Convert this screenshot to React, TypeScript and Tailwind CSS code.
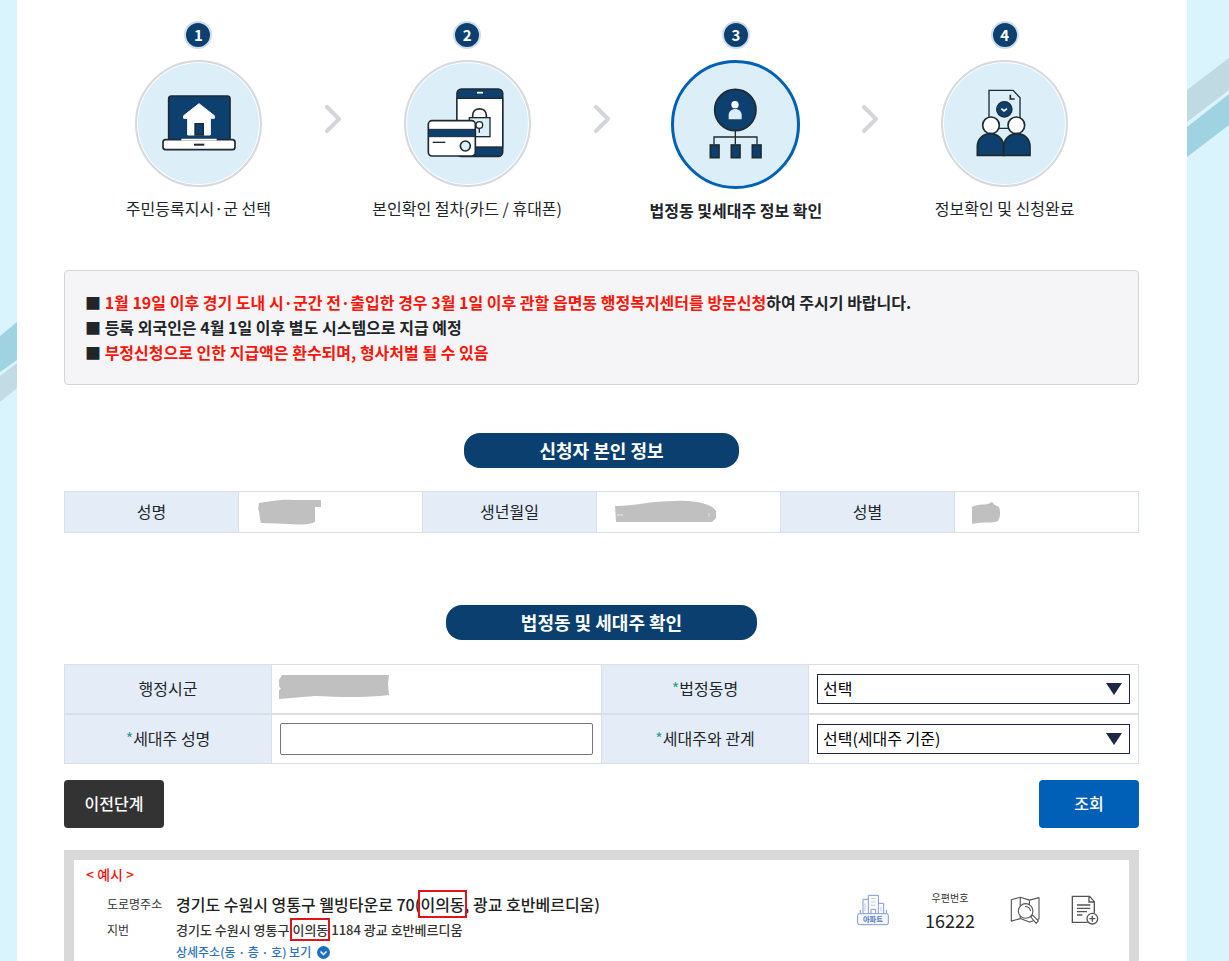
import React from 'react';
import clsx from 'clsx';

const LINE = '#1f2a30';
const NAVY = '#0d406f';
const PALE = '#dceef8';

const LaptopIcon = () => (
  <svg viewBox="6 6 369 369" className="h-full w-full" aria-hidden="true">
    <rect x="101" y="108" width="184" height="140" rx="8" fill={NAVY} stroke={LINE} strokeWidth="5" />
    <path d="M192 131 L238 167 V175 H226 V225 H158 V175 H146 V167 Z" fill="#fff" stroke="#fff" strokeWidth="3" strokeLinejoin="round" />
    <path d="M180 225 V191 H205 V225 Z" fill={NAVY} stroke={LINE} strokeWidth="4" />
    <rect x="84" y="239" width="216" height="30" rx="8" fill="#fff" stroke={LINE} strokeWidth="5" />
    <path d="M139 239 H245" stroke="#fff" strokeWidth="5" />
    <path d="M177 254 H208" stroke={LINE} strokeWidth="6" />
  </svg>
);

const PhoneCardIcon = () => (
  <svg viewBox="6 6 369 369" className="h-full w-full" aria-hidden="true">
    <rect x="159" y="87" width="137" height="202" rx="13" fill={NAVY} stroke={LINE} strokeWidth="5" />
    <rect x="159" y="115" width="137" height="146" fill="#fff" stroke={LINE} strokeWidth="4" />
    <path d="M219 98 H237" stroke="#fff" strokeWidth="5" />
    <path d="M206 173 V166 C206 140 247 140 247 166 V173" fill="none" stroke={LINE} strokeWidth="5" />
    <rect x="196" y="173" width="62" height="57" fill={PALE} stroke={LINE} strokeWidth="4" />
    <circle cx="226" cy="195" r="10" fill="#fff" stroke={LINE} strokeWidth="4" />
    <path d="M226 205 V218" stroke={LINE} strokeWidth="4" />
    <rect x="73" y="182" width="141" height="106" rx="11" fill="#fff" stroke={LINE} strokeWidth="5" />
    <rect x="74" y="208" width="139" height="22" fill={NAVY} stroke={LINE} strokeWidth="3" />
    <path d="M86 247 H124" stroke={LINE} strokeWidth="4" />
    <circle cx="184" cy="258" r="15" fill={PALE} stroke={LINE} strokeWidth="5" />
  </svg>
);

const HouseholdIcon = () => (
  <svg viewBox="6 6 369 369" className="h-full w-full" aria-hidden="true">
    <circle cx="190" cy="147" r="62" fill={NAVY} stroke={LINE} strokeWidth="5" />
    <circle cx="189" cy="131" r="11" fill="#fff" />
    <path d="M170 175 V163 C170 138 209 138 209 163 V175 Z" fill={PALE} />
    <path d="M190 210 V250 M126 250 V228 H255 V250" fill="none" stroke={LINE} strokeWidth="4" />
    <rect x="115" y="252" width="26" height="38" fill={NAVY} stroke={LINE} strokeWidth="5" />
    <rect x="178" y="252" width="26" height="38" fill={NAVY} stroke={LINE} strokeWidth="5" />
    <rect x="241" y="252" width="26" height="38" fill={NAVY} stroke={LINE} strokeWidth="5" />
  </svg>
);

const DocumentPeopleIcon = () => (
  <svg viewBox="6 6 369 369" className="h-full w-full" aria-hidden="true">
    <path d="M144 205 V91 H216 L237 113 V205 Z" fill={PALE} stroke={LINE} strokeWidth="4" />
    <path d="M208 104 V117 H221" fill="none" stroke={LINE} strokeWidth="5" />
    <circle cx="190" cy="148" r="23" fill={NAVY} stroke={LINE} strokeWidth="4" />
    <path d="M181 146 L189 153 L198 146" fill="none" stroke="#fff" strokeWidth="5" />
    <circle cx="150" cy="196" r="25" fill="#fff" stroke={LINE} strokeWidth="5" />
    <circle cx="226" cy="196" r="25" fill="#fff" stroke={LINE} strokeWidth="5" />
    <path d="M109 286 V260 C109 235 128 221 148 221 C170 221 188 237 188 260 V286 Z" fill={NAVY} stroke={LINE} strokeWidth="5" />
    <path d="M188 286 V260 C188 237 206 221 228 221 C249 221 267 235 267 260 V286 Z" fill={NAVY} stroke={LINE} strokeWidth="5" />
  </svg>
);

const ApartmentIcon = () => (
  <svg viewBox="0 0 96 96" className="h-8 w-8" fill="none" stroke="#7f9bd0" strokeWidth="3" aria-hidden="true">
    <path d="M34 58 V4 H64 V58 M34 16 H18 V58 M64 28 H80 V58 M42 58 V46 H56 V58" />
    <path d="M42 14 H56 M42 24 H56 M42 34 H56 M24 28 V52 M72 38 V52" stroke="#b7c8ea" />
    <path d="M10 48 V58 M88 48 V58" />
    <rect x="2" y="59" width="92" height="33" rx="5" fill="#f5f8ff" />
    <text x="48" y="83" textAnchor="middle" fontSize="22" fontWeight="700" fill="#5577b5" stroke="none">
      아파트
    </text>
  </svg>
);

const MapSearchIcon = () => (
  <svg viewBox="0 0 96 88" className="h-7 w-8" fill="none" stroke="#555" strokeWidth="3.5" strokeLinejoin="round" aria-hidden="true">
    <path d="M5 12 L33 4 L62 13 L92 5 V72 L62 82 L33 71 L5 79 Z M33 4 V71 M62 13 V30" />
    <circle cx="50" cy="47" r="23" fill="#fff" />
    <path d="M48 33 C58 33 64 39 65 47" />
    <path d="M66 66 L72 60 L90 78 L83 86 Z" fill="#fff" />
  </svg>
);

const DocumentAddIcon = () => (
  <svg viewBox="0 0 84 90" className="h-[30px] w-7" fill="none" stroke="#555" strokeWidth="4" aria-hidden="true">
    <path d="M50 82 H4 V4 H56 L70 20 V56 M54 4 V21 H70" />
    <path d="M18 30 H58 M18 40 H58 M18 50 H48 M18 60 H34" />
    <circle cx="64" cy="71" r="16" fill="#fff" />
    <path d="M64 62 V80 M55 71 H73" />
  </svg>
);

const Chevron = () => (
  <svg viewBox="0 0 16 28" className="mt-21 h-7 w-4 shrink-0" aria-hidden="true">
    <path d="M2 2 L14 14 L2 26" fill="none" stroke="#d4d5da" strokeWidth="4" strokeLinecap="round" strokeLinejoin="round" />
  </svg>
);

const steps = [
  { label: '주민등록지시·군 선택', icon: <LaptopIcon /> },
  { label: '본인확인 절차(카드 / 휴대폰)', icon: <PhoneCardIcon /> },
  { label: '법정동 및세대주 정보 확인', icon: <HouseholdIcon /> },
  { label: '정보확인 및 신청완료', icon: <DocumentPeopleIcon /> },
];

const CURRENT_STEP = 2;

const StepList = () => (
  <ol className="flex px-2 pt-[21px]">
    {steps.map((step, index) => {
      const active = index === CURRENT_STEP;
      return (
        <React.Fragment key={step.label}>
          {index > 0 && <Chevron />}
          <li className="flex flex-1 flex-col items-center" aria-current={active ? 'step' : undefined}>
            <span className="flex h-7 w-7 items-center justify-center rounded-full border-2 border-[#cfdced] bg-[#0d406f] text-[15px] leading-6 font-bold text-white">
              {index + 1}
            </span>
            <div
              className={clsx(
                'mt-[11px] rounded-full bg-[#dceef8]',
                active
                  ? 'h-[129px] w-[129px] border-3 border-[#0060b3]'
                  : 'h-[127px] w-[127px] border-2 border-[#d7d9dc] shadow-[inset_0_0_0_1px_#ffffff]'
              )}
            >
              {step.icon}
            </div>
            <p className={clsx('mt-[9px] leading-6 whitespace-nowrap', active && 'font-bold')}>{step.label}</p>
          </li>
        </React.Fragment>
      );
    })}
  </ol>
);

const SectionTitle = ({ children }: { children: React.ReactNode }) => (
  <h2 className="mx-auto w-fit rounded-2xl bg-[#0a3f70] px-[75px] text-lg leading-[35px] font-bold text-white">
    {children}
  </h2>
);

const Required = () => <span className="text-[#2a9d8f]">*</span>;

interface SelectBoxProps {
  id: string;
  placeholder: string;
}

const SelectBox = ({ id, placeholder }: SelectBoxProps) => (
  <div className="relative">
    <select
      id={id}
      className="block h-[30px] w-full appearance-none border border-[#1f2746] bg-white pr-8 pb-0.5 pl-[5px] text-black"
    >
      <option>{placeholder}</option>
    </select>
    <svg viewBox="0 0 16 12" className="pointer-events-none absolute top-[9px] right-2 h-3 w-4" aria-hidden="true">
      <path d="M0 0 H16 L8 12 Z" fill="#1f2746" />
    </svg>
  </div>
);

const thClass = 'border border-[#d9dfe5] bg-[#e4edf7] pb-0.5 text-center font-normal';
const tdClass = 'border border-[#d9dfe5]';

const ApplicantTable = () => (
  <table className="mt-[23px] w-full table-fixed border-collapse">
    <tbody>
      <tr className="h-[41px]">
        <th scope="row" className={clsx(thClass, 'w-[174px]')}>성명</th>
        <td className={clsx(tdClass, 'pl-[19px]')}>
          <svg viewBox="0 0 63 26" className="h-[26px] w-[63px]" aria-label="가려진 성명">
            <path d="M1 4 C12 3 20 0 35 1 L63 1 V8 H57 V23 C50 26 40 26 32 25 L3 24 C1 18 2 13 0 10 Z" fill="#c0c0c0" />
          </svg>
        </td>
        <th scope="row" className={clsx(thClass, 'w-[174px]')}>생년월일</th>
        <td className={clsx(tdClass, 'pl-[18px]')}>
          <svg viewBox="0 0 101 24" className="h-6 w-[101px]" aria-label="가려진 생년월일">
            <path d="M0 6 C20 6 35 1 61 1 C82 0 98 5 101 11 V18 L97 22 H1 Z" fill="#c0c0c0" />
            <path d="M2 15 H8 M94 13 V17" stroke="#e4e4e4" />
          </svg>
        </td>
        <th scope="row" className={clsx(thClass, 'w-[174px]')}>성별</th>
        <td className={clsx(tdClass, 'pl-[17px]')}>
          <svg viewBox="0 0 28 26" className="h-[26px] w-7" aria-label="가려진 성별">
            <path d="M0 8 C5 5 12 6 16 5 L20 3 L23 6 L27 8 C29 14 28 18 26 22 C20 25 12 22 0 25 Z" fill="#c0c0c0" />
          </svg>
        </td>
      </tr>
    </tbody>
  </table>
);

const HouseholdTable = () => (
  <table className="mt-6 w-full table-fixed border-collapse">
    <tbody>
      <tr className="h-[49px]">
        <th scope="row" className={clsx(thClass, 'w-[207px] border-b-2')}>행정시군</th>
        <td className={clsx(tdClass, 'border-b-2 pl-[7px]')}>
          <svg viewBox="0 0 110 30" className="h-[30px] w-[110px]" aria-label="가려진 행정시군">
            <path d="M3 1 H110 L109 10 L110 21 C85 24 60 23 36 22 L0 25 V16 L2 15 L0 12 V6 Z" fill="#c0c0c0" />
          </svg>
        </td>
        <th scope="row" className={clsx(thClass, 'w-[207px] border-b-2')}>
          <label htmlFor="legal-dong"><Required />법정동명</label>
        </th>
        <td className={clsx(tdClass, 'border-b-2 px-2')}>
          <SelectBox id="legal-dong" placeholder="선택" />
        </td>
      </tr>
      <tr className="h-[50px]">
        <th scope="row" className={thClass}>
          <label htmlFor="head-name"><Required />세대주 성명</label>
        </th>
        <td className={clsx(tdClass, 'px-2')}>
          <input id="head-name" type="text" className="block h-8 w-full rounded-xs border border-[#767676] bg-white px-1" />
        </td>
        <th scope="row" className={thClass}>
          <label htmlFor="relation"><Required />세대주와 관계</label>
        </th>
        <td className={clsx(tdClass, 'px-2')}>
          <SelectBox id="relation" placeholder="선택(세대주 기준)" />
        </td>
      </tr>
    </tbody>
  </table>
);

const Highlight = ({ children }: { children: React.ReactNode }) => (
  <mark className="bg-transparent text-inherit outline-2 outline-[#e0141b]">{children}</mark>
);

const AddressExample = () => (
  <section className="mt-[22px] flex-1 border-[10px] border-b-0 border-[#d9d9d9] px-3 pt-1">
    <p className="text-sm leading-5 font-medium text-[#f01414]">&lt; 예시 &gt;</p>
    <div className="flex items-start justify-between pr-[18px] pl-[21px]">
      <dl className="grid grid-cols-[69px_auto] text-[#333]">
        <dt className="text-xs leading-10">도로명주소</dt>
        <dd className="text-base leading-10 font-medium text-[#222]">
          경기도 수원시 영통구 웰빙타운로 70(<Highlight>이의동</Highlight>, 광교 호반베르디움)
        </dd>
        <dt className="text-xs leading-3">지번</dt>
        <dd className="text-[13px] leading-3 font-medium">
          경기도 수원시 영통구 <Highlight>이의동</Highlight> 1184 광교 호반베르디움
        </dd>
        <dd className="col-start-2 pt-1.5">
          <a href="#detail" className="flex items-center gap-1.5 text-xs leading-5 font-medium text-[#2a70c0]">
            상세주소(동 · 층 · 호) 보기
            <svg viewBox="0 0 13 13" className="h-[13px] w-[13px]" aria-hidden="true">
              <circle cx="6.5" cy="6.5" r="6.5" fill="#1d6fc4" />
              <path d="M3.5 5.5 L6.5 8.5 L9.5 5.5" fill="none" stroke="#fff" strokeWidth="1.5" />
            </svg>
          </a>
        </dd>
      </dl>
      <div className="flex items-center pt-1">
        <ApartmentIcon />
        <div className="ml-9 text-center text-[#333]">
          <p className="text-[10px] leading-5">우편번호</p>
          <p className="text-lg leading-6 text-[#222]">16222</p>
        </div>
        <button type="button" aria-label="지도 보기" className="ml-[34px]">
          <MapSearchIcon />
        </button>
        <button type="button" aria-label="문서 추가" className="ml-[30px]">
          <DocumentAddIcon />
        </button>
      </div>
    </div>
  </section>
);

const App = () => (
  <div className="flex min-h-screen bg-[#d9f4fc] font-['Noto_Sans_CJK_KR',sans-serif] text-base text-[#212529]">
    {/* Left background stripes */}
    <div className="w-[17px] shrink-0">
      <svg viewBox="0 0 17 410" className="h-[410px] w-full" aria-hidden="true">
        <path d="M0 336 L17 322 V360 L0 372 Z" fill="#9fd3e2" />
        <path d="M0 376 L17 363 V388 L0 402 Z" fill="#c3dbe5" />
      </svg>
    </div>

    <main className="flex min-w-0 flex-1 flex-col bg-white pr-12 pl-[47px]">
      <StepList />

      <ul className="mt-12 rounded-sm border border-[#d3d4d6] bg-[#f5f5f7] px-5 py-[19px] leading-[25px] font-bold">
        <li>
          ■ <span className="text-[#fb1509]">1월 19일 이후 경기 도내 시·군간 전·출입한 경우 3월 1일 이후 관할 읍면동 행정복지센터를 방문신청</span>하여 주시기 바랍니다.
        </li>
        <li>■ 등록 외국인은 4월 1일 이후 별도 시스템으로 지급 예정</li>
        <li>
          ■ <span className="text-[#fb1509]">부정신청으로 인한 지급액은 환수되며, 형사처벌 될 수 있음</span>
        </li>
      </ul>

      <section className="mt-12">
        <SectionTitle>신청자 본인 정보</SectionTitle>
        <ApplicantTable />
      </section>

      <section className="mt-[72px]">
        <SectionTitle>법정동 및 세대주 확인</SectionTitle>
        <HouseholdTable />
      </section>

      <div className="mt-4 flex justify-between">
        <button type="button" className="h-12 w-[100px] rounded-sm bg-[#333] pb-0.5 font-medium text-white">
          이전단계
        </button>
        <button type="button" className="h-12 w-[100px] rounded-sm bg-[#0060b8] pb-0.5 font-medium text-white">
          조회
        </button>
      </div>

      <AddressExample />
    </main>

    {/* Right background stripes */}
    <div className="w-[42px] shrink-0">
      <svg viewBox="0 0 42 160" className="h-40 w-full" aria-hidden="true">
        <path d="M0 90 L42 58 V90 L0 122 Z" fill="#c0dae3" />
        <path d="M0 127 L42 94 V125 L0 157 Z" fill="#9fd3e2" />
      </svg>
    </div>
  </div>
);

export default App;
